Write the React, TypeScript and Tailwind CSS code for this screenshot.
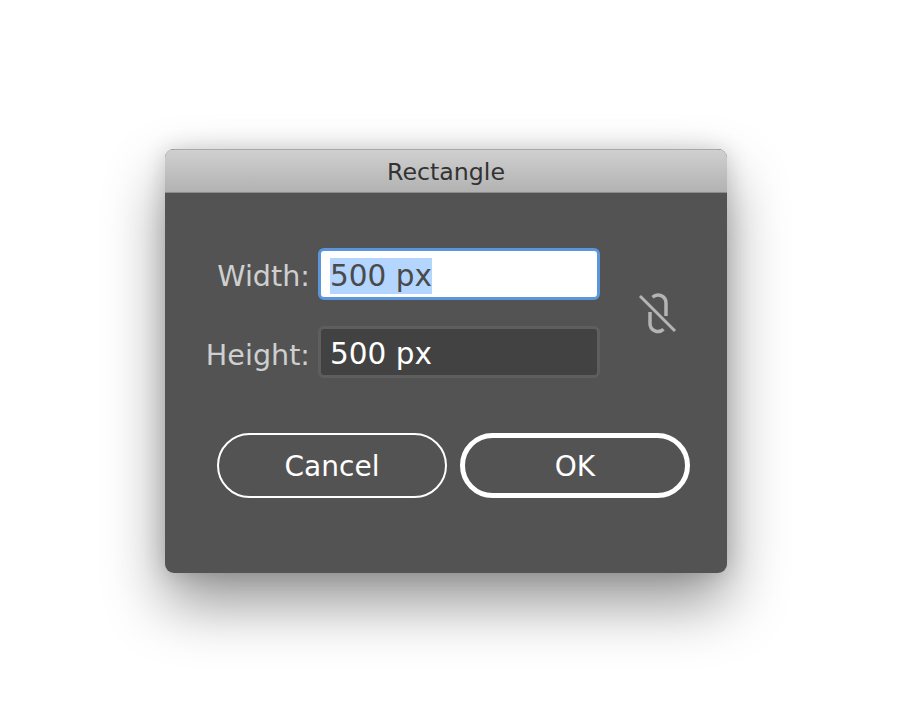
const font = "font-['DejaVu_Sans',sans-serif]";

function UnlinkIcon() {
  return (
    <svg width="40" height="44" viewBox="0 0 40 44" fill="none" stroke="#b4b4b4" strokeWidth="3.5">
      <path d="M14.5 5.2 A8 8 0 0 1 28 11 V24" />
      <path d="M12 20 V31.5 A8 8 0 0 0 25.5 37.3" />
      <path d="M2 4 L37 39" strokeWidth="3" />
    </svg>
  );
}

export default function App() {
  return (
    <div className={`${font} w-[912px] h-[726px] bg-white overflow-hidden pt-[149px] pl-[165px]`}>
      <div className="w-[562px] h-[424px] rounded-[9px] overflow-hidden bg-[#535353] shadow-[0_30px_60px_rgba(0,0,0,0.42),0_0_22px_rgba(0,0,0,0.16)] flex flex-col">
        <div className="h-[44px] shrink-0 pt-[4px] bg-gradient-to-b from-[#d0d0d0] to-[#b2b2b2] border-t border-b border-t-[#a8a8a8] border-b-[#8c8c8c] flex items-center justify-center text-[23.7px] leading-none text-[#333333]">
          Rectangle
        </div>
        <div className="flex-1 flex flex-col pt-[55px] pl-[40px]">
          <div className="flex items-center">
            <div className="flex flex-col gap-[26px]">
              <div className="flex items-center">
                <span className="w-[105px] pt-[4px] text-right text-[28.6px] leading-none text-[#cfcfcf]">Width:</span>
                <div className="ml-[8px] w-[282px] h-[52px] pt-[4px] rounded-[6px] border-[3px] border-[#5b95dc] bg-white flex items-center pl-[9px]">
                  <span className="bg-[#b4d5fe] text-[#4a4a4a] text-[29.5px] leading-[36px]">500 px</span>
                </div>
              </div>
              <div className="flex items-center">
                <span className="w-[105px] pt-[6px] text-right text-[28.6px] leading-none text-[#cfcfcf]">Height:</span>
                <div className="ml-[8px] w-[282px] h-[52px] pt-[4px] rounded-[6px] border-[3px] border-[#5e5e5e] bg-[#424242] flex items-center pl-[9px]">
                  <span className="text-white text-[29.5px] leading-[36px]">500 px</span>
                </div>
              </div>
            </div>
            <div className="ml-[38px] pt-[2px]">
              <UnlinkIcon />
            </div>
          </div>
          <div className="flex items-center gap-[13px] mt-[55px] ml-[12px]">
            <button className="w-[230px] h-[65px] pt-[2px] rounded-full border-2 border-white text-white text-[28px] leading-none">
              Cancel
            </button>
            <button className="w-[230px] h-[65px] pt-[2px] rounded-full border-[5px] border-white text-white text-[28px] leading-none">
              OK
            </button>
          </div>
        </div>
      </div>
    </div>
  );
}
